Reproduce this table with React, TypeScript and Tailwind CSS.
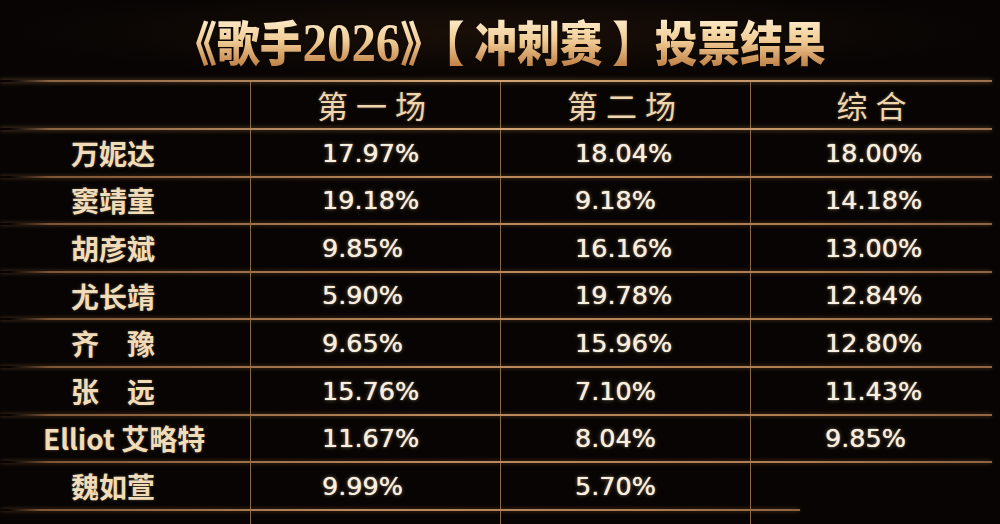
const ROWS: { name: string; a: string; b: string; c: string; wide?: boolean }[] = [
  { name: "万妮达", a: "17.97%", b: "18.04%", c: "18.00%" },
  { name: "窦靖童", a: "19.18%", b: "9.18%", c: "14.18%" },
  { name: "胡彦斌", a: "9.85%", b: "16.16%", c: "13.00%" },
  { name: "尤长靖", a: "5.90%", b: "19.78%", c: "12.84%" },
  { name: "齐　豫", a: "9.65%", b: "15.96%", c: "12.80%" },
  { name: "张　远", a: "15.76%", b: "7.10%", c: "11.43%" },
  { name: "Elliot 艾略特", a: "11.67%", b: "8.04%", c: "9.85%", wide: true },
  { name: "魏如萱", a: "9.99%", b: "5.70%", c: "" },
];

const cjk = "font-['Noto_Sans_CJK_SC','Noto_Sans',sans-serif]";
const num = "font-['DejaVu_Sans','Liberation_Sans',sans-serif]";

// gold rule with faded left edge
function Rule({ short = false, bright = false }: { short?: boolean; bright?: boolean }) {
  return (
    <div
      className={
        "h-[2px] shrink-0 " +
        (short ? "w-[800px] " : "w-[992px] ") +
        (bright
          ? "bg-[linear-gradient(90deg,transparent_1%,#8c6443_5%,#d2a477_45%,#c39468_80%,#9a7050_100%)] shadow-[0_0_5px_rgba(214,160,100,0.6)]"
          : "bg-[linear-gradient(90deg,transparent_1%,#7d5535_5%,#bd8a5e_45%,#ad7c52_80%,#8e6442_100%)] shadow-[0_0_4px_rgba(190,130,80,0.5)]")
      }
    />
  );
}

const cell = "border-l border-[#8a6848] flex items-center";

export default function App() {
  return (
    <div className="w-[1000px] h-[524px] overflow-hidden bg-[#070403] flex flex-col">
      <div className="h-[80px] shrink-0 flex items-center justify-center bg-[radial-gradient(ellipse_at_50%_40%,#1a0f08_0%,#070403_70%)]">
        <div
          className={
            cjk +
            " font-black text-[48px] leading-none whitespace-nowrap scale-x-[0.89] bg-gradient-to-b from-[#fff5dc] via-[#f1cd95] to-[#b8763a] bg-clip-text text-transparent pt-[4px]"
          }
        >
          《歌手
          <span className="font-['Liberation_Serif',serif] font-bold text-[55px]">2026</span>
          》【 冲刺赛 】投票结果
        </div>
      </div>

      <Rule bright />
      <div className="h-[46px] shrink-0 grid grid-cols-[250px_250px_250px_250px]">
        <div />
        {["第一场", "第二场", "综合"].map((h) => (
          <div
            key={h}
            className={
              cell +
              " justify-center " +
              cjk +
              " text-[31px] tracking-[8px] text-[#efd6ae] [text-shadow:0_0_3px_rgba(240,200,150,0.4)]"
            }
          >
            {h}
          </div>
        ))}
      </div>
      <Rule bright />

      {ROWS.map((r, i) => (
        <div key={r.name} className="flex flex-col shrink-0">
          <div className="h-[45.6px] grid grid-cols-[250px_250px_250px_250px]">
            <div
              className={
                "flex items-center whitespace-nowrap " +
                cjk +
                " font-bold text-[28px] text-[#f1dcb9] [text-shadow:0_0_3px_rgba(240,210,160,0.35)] " +
                (r.wide ? "pl-[43px]" : "pl-[71px]")
              }
            >
              {r.name}
            </div>
            {[r.a, r.b, r.c].map((v, j) => (
              <div
                key={j}
                className={
                  cell +
                  " " +
                  num +
                  " text-[25.5px] text-[#f8efdf] [text-shadow:0_0_1px_#f8efdf,0_0_4px_rgba(255,225,180,0.45)] " +
                  (j === 0 ? "pl-[71px]" : "pl-[74px]")
                }
              >
                {v}
              </div>
            ))}
          </div>
          <Rule short={i === ROWS.length - 1} />
        </div>
      ))}

      <div className="flex-1 grid grid-cols-[250px_250px_250px_250px]">
        <div />
        <div className="border-l border-[#8a6848]" />
        <div className="border-l border-[#8a6848]" />
        <div className="border-l border-[#8a6848]" />
      </div>
    </div>
  );
}
